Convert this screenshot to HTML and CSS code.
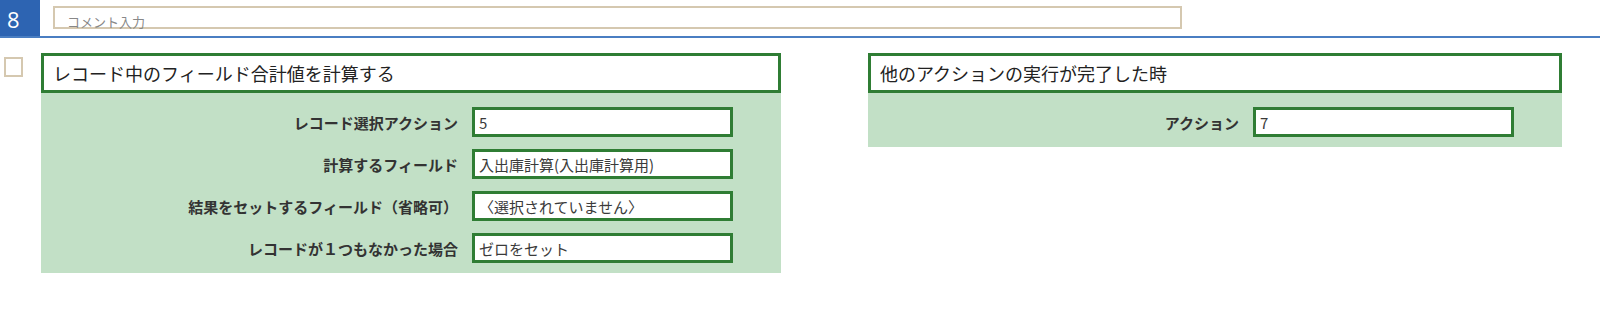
FILE: index.html
```html
<!DOCTYPE html>
<html lang="ja">
<head>
  <meta charset="UTF-8">
  <meta name="viewport" content="width=device-width, initial-scale=1.0">
  <title>アクション設定</title>
  <link rel="stylesheet" href="styles.css">
</head>
<body>
<div class="step">
  <div class="step-head">
    <div class="step-no">8</div>
    <div class="comment-box"><span class="placeholder">コメント入力</span></div>
  </div>

  <div class="step-body">
    <span class="check"></span>

    <section class="card card-action">
      <div class="card-title">レコード中のフィールド合計値を計算する</div>
      <div class="card-fields">
        <div class="field-label">レコード選択アクション</div>
        <div class="field-value">5</div>

        <div class="field-label">計算するフィールド</div>
        <div class="field-value">入出庫計算(入出庫計算用)</div>

        <div class="field-label">結果をセットするフィールド（省略可）</div>
        <div class="field-value">〈選択されていません〉</div>

        <div class="field-label">レコードが１つもなかった場合</div>
        <div class="field-value">ゼロをセット</div>
      </div>
    </section>

    <section class="card card-trigger">
      <div class="card-title">他のアクションの実行が完了した時</div>
      <div class="card-fields">
        <div class="field-label">アクション</div>
        <div class="field-value">7</div>
      </div>
    </section>
  </div>
</div>
</body>
</html>
```

FILE: styles.css
```css
:root {
  --step-blue: #2d64b2;
  --line-blue: #4a7ec2;
  --tan-border: #d5c8b0;
  --dark-green: #2f7d34;
  --light-green: #c2e0c6;
}

body {
  margin: 0;
  padding: 0;
  font-family: "Noto Sans CJK JP", "Noto Sans", sans-serif;
  color: #222;
  background-color: #fff;
}

.step-head {
  display: flex;
  align-items: flex-start;
  height: 36px;
  border-bottom: 2px solid var(--line-blue);
}

.step-no {
  width: 33px;
  height: 36px;
  padding-left: 7px;
  background-color: var(--step-blue);
  color: #fff;
  font-family: "Open Sans", "Noto Sans", sans-serif;
  font-size: 22px;
  line-height: 38px;
}

.comment-box {
  box-sizing: border-box;
  width: 1129px;
  height: 23px;
  margin: 6px 0 0 13px;
  padding: 8px 12px 0;
  border: 2px solid var(--tan-border);
  font-size: 13px;
  line-height: 11px;
}

.placeholder {
  color: #888;
}

.step-body {
  display: flex;
  align-items: flex-start;
  padding-top: 15px;
}

.check {
  box-sizing: border-box;
  width: 19px;
  height: 20px;
  margin: 4px 0 0 4px;
  border: 2px solid var(--tan-border);
  background: #fff;
}

.card {
  flex-shrink: 0;
}

.card-action {
  width: 740px;
  margin-left: 18px;
}

.card-trigger {
  width: 694px;
  margin-left: 87px;
}

.card-title {
  box-sizing: border-box;
  height: 40px;
  padding: 0 9px;
  border: 3px solid var(--dark-green);
  background: #fff;
  font-size: 18px;
  line-height: 34px;
}

.card-fields {
  display: grid;
  grid-template-columns: 1fr 261px;
  align-items: center;
  column-gap: 14px;
  row-gap: 12px;
  padding: 14px 48px 10px 0;
  background-color: var(--light-green);
}

.field-label {
  text-align: right;
  font-size: 15px;
  font-weight: 700;
  color: #333;
}

.field-value {
  box-sizing: border-box;
  height: 30px;
  padding: 1px 4px 0;
  border: 3px solid var(--dark-green);
  background: #fff;
  font-size: 15px;
  line-height: 23px;
  color: #3a3a3a;
  white-space: nowrap;
}
```
